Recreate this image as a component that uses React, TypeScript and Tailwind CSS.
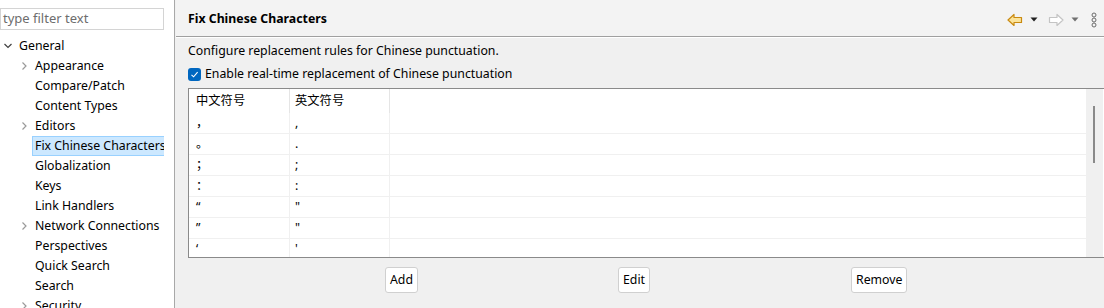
import React from 'react';

type TreeItem = { label: string; expandable?: boolean; selected?: boolean };

const children: TreeItem[] = [
  { label: 'Appearance', expandable: true },
  { label: 'Compare/Patch' },
  { label: 'Content Types' },
  { label: 'Editors', expandable: true },
  { label: 'Fix Chinese Characters', selected: true },
  { label: 'Globalization' },
  { label: 'Keys' },
  { label: 'Link Handlers' },
  { label: 'Network Connections', expandable: true },
  { label: 'Perspectives' },
  { label: 'Quick Search' },
  { label: 'Search' },
  { label: 'Security', expandable: true },
];

const rules: [string, string][] = [
  ['，', ','],
  ['。', '.'],
  ['；', ';'],
  ['：', ':'],
  ['“', '"'],
  ['”', '"'],
  ['‘', "'"],
];

const Chevron: React.FC<{ down?: boolean }> = ({ down }) => (
  <svg width="8" height="8" viewBox="0 0 8 8" className="shrink-0">
    {down ? (
      <path d="M0.5 2 L4 5.5 L7.5 2" fill="none" stroke="#404040" strokeWidth="1.2" />
    ) : (
      <path d="M2.5 0.5 L6 4 L2.5 7.5" fill="none" stroke="#9a9a9a" strokeWidth="1.2" />
    )}
  </svg>
);

const BackArrow = () => (
  <svg width="16" height="14" viewBox="0 0 16 14">
    <path
      d="M1 7 L7 1.5 L7 4.5 L14.5 4.5 L14.5 9.5 L7 9.5 L7 12.5 Z"
      fill="#fbe39a"
      stroke="#c98a10"
      strokeWidth="1.2"
      strokeLinejoin="round"
    />
  </svg>
);

const ForwardArrow = () => (
  <svg width="16" height="14" viewBox="0 0 16 14">
    <path
      d="M15 7 L9 1.5 L9 4.5 L1.5 4.5 L1.5 9.5 L9 9.5 L9 12.5 Z"
      fill="#ffffff"
      stroke="#c4c4c4"
      strokeWidth="1.2"
      strokeLinejoin="round"
    />
  </svg>
);

const DropTriangle: React.FC<{ color: string }> = ({ color }) => (
  <svg width="8" height="5" viewBox="0 0 8 5">
    <path d="M0.5 0.5 L7.5 0.5 L4 4.5 Z" fill={color} />
  </svg>
);

const Kebab = () => (
  <svg width="6" height="16" viewBox="0 0 6 16">
    <circle cx="3" cy="3" r="2" fill="none" stroke="#6a6a6a" strokeWidth="1" />
    <circle cx="3" cy="8" r="2" fill="none" stroke="#6a6a6a" strokeWidth="1" />
    <circle cx="3" cy="13" r="2" fill="none" stroke="#6a6a6a" strokeWidth="1" />
  </svg>
);

const Button: React.FC<{ label: string }> = ({ label }) => (
  <button className="h-[26px] px-[4px] bg-white border border-[#d0d0d0] rounded-[3px] text-[12.3px] text-black leading-none">
    {label}
  </button>
);

export default function App() {
  return (
    <div
      className="flex w-[1104px] h-[308px] overflow-hidden bg-[#f0f0f0] text-[12.3px] text-black"
      style={{ fontFamily: '"Noto Sans", "Noto Sans CJK SC", sans-serif' }}
    >
      {/* left preference tree */}
      <div className="w-[175px] shrink-0 bg-white border-r border-[#a8a8a8] flex flex-col">
        <div className="mt-[8px] w-[164px] h-[23px] border border-[#d4d4d4] flex items-center pl-[2px] text-[13px] text-[#6d6d6d]">
          type filter text
        </div>
        <div className="w-[164px] overflow-hidden mt-[6px]">
          <div className="h-[20px] flex items-center pl-[4px] gap-[7px]">
            <Chevron down />
            <span className="whitespace-nowrap">General</span>
          </div>
          {children.map((item) => (
            <div key={item.label} className="h-[20px] flex items-center">
              <div className="w-[32px] shrink-0 flex items-center pl-[20px]">
                {item.expandable && <Chevron />}
              </div>
              <span
                className={
                  item.selected
                    ? 'h-[20px] flex items-center pl-[2px] pr-[4px] bg-[#cce8ff] border border-[#99d1ff] whitespace-nowrap'
                    : 'pl-[3px] whitespace-nowrap'
                }
              >
                {item.label}
              </span>
            </div>
          ))}
        </div>
      </div>

      {/* right page */}
      <div className="flex-1 flex flex-col ml-px">
        <div className="h-[37px] shrink-0 bg-[#f3f3f3] border-b border-[#a0a0a0] flex items-center pt-[3px] pl-[12px] pr-[8px]">
          <span className="font-bold flex-1">Fix Chinese Characters</span>
          <div className="flex items-center">
            <BackArrow />
            <div className="ml-[7px]">
              <DropTriangle color="#202020" />
            </div>
            <div className="ml-[10px]">
              <ForwardArrow />
            </div>
            <div className="ml-[7px]">
              <DropTriangle color="#707070" />
            </div>
            <div className="ml-[12px]">
              <Kebab />
            </div>
          </div>
        </div>
        <div className="border-t border-white pl-[12px]">
          <div className="mt-[5px] h-[16px] leading-[16px]">Configure replacement rules for Chinese punctuation.</div>
          <div className="mt-[7px] h-[16px] flex items-center gap-[4px]">
            <div className="w-[13px] h-[13px] rounded-[3px] bg-[#0067c0] flex items-center justify-center">
              <svg width="9" height="9" viewBox="0 0 9 9">
                <path d="M1.5 4.8 L3.6 6.8 L7.6 2.2" fill="none" stroke="#ffffff" strokeWidth="1.1" />
              </svg>
            </div>
            <span className="leading-[16px]">Enable real-time replacement of Chinese punctuation</span>
          </div>

          <div className="mt-[6px] w-[917px] h-[170px] bg-white border border-[#8a8a8a] flex overflow-hidden">
            <div className="flex-1 flex flex-col">
              <div className="h-[24px] shrink-0 flex">
                <div className="w-[101px] border-r border-[#e5e5e5] flex items-center pl-[7px]">中文符号</div>
                <div className="w-[100px] border-r border-[#e5e5e5] flex items-center pl-[5px]">英文符号</div>
                <div className="flex-1" />
              </div>
              {rules.map(([cn, en], i) => (
                <div key={i} className="h-[21px] shrink-0 flex border-b border-[#f0f0f0]">
                  <div className="w-[101px] border-r border-[#f0f0f0] flex items-center pl-[7px]">{cn}</div>
                  <div className="w-[100px] border-r border-[#f0f0f0] flex items-center pl-[5px]">{en}</div>
                  <div className="flex-1" />
                </div>
              ))}
            </div>
            <div className="w-[17px] shrink-0 bg-[#f0f0f0] relative mr-px">
              <div className="absolute left-[7px] top-[17px] w-[2px] h-[57px] bg-[#8a8a8a]" />
            </div>
          </div>

          <div className="mt-[9px] flex pl-[197px]">
            <div className="w-[233px]">
              <Button label="Add" />
            </div>
            <div className="w-[233px]">
              <Button label="Edit" />
            </div>
            <div className="w-[233px]">
              <Button label="Remove" />
            </div>
          </div>
        </div>
      </div>
    </div>
  );
}
